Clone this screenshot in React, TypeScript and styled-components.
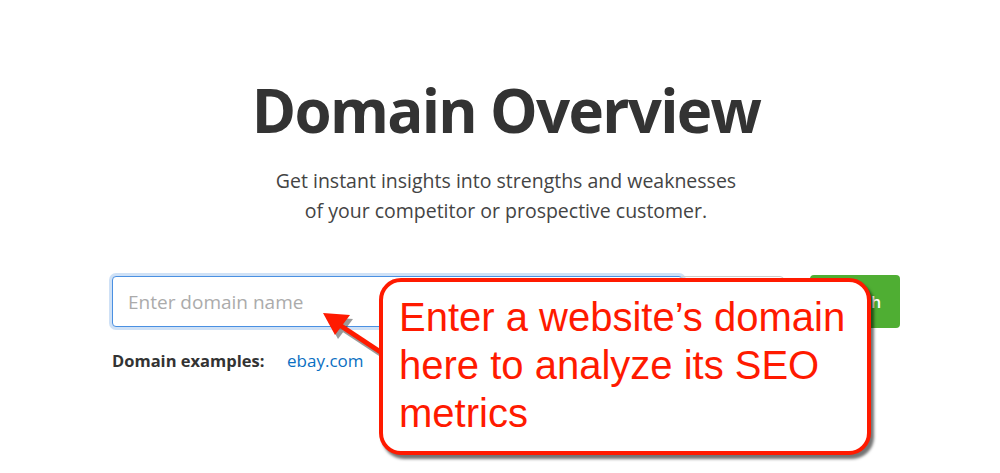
import React from 'react'
import styled, { createGlobalStyle } from 'styled-components'

const GlobalStyle = createGlobalStyle`
  html, body {
    margin: 0;
    padding: 0;
    background: #ffffff;
  }
  body {
    font-family: 'Open Sans', 'Noto Sans', sans-serif;
    color: #333333;
  }
`

const Page = styled.main`
  position: relative;
  width: 1000px;
  height: 473px;
  overflow: hidden;
  box-sizing: border-box;
  padding: 0 100px 0 112px;
`

const Title = styled.h1`
  margin: 0;
  padding-top: 70px;
  font-size: 60px;
  line-height: 80px;
  font-weight: 700;
  letter-spacing: -1.7px;
  text-align: center;
  color: #333333;
`

const Subtitle = styled.p`
  margin: 16px 0 0;
  font-size: 19.5px;
  line-height: 30px;
  text-align: center;
  color: #444444;
`

const SearchRow = styled.form`
  display: flex;
  align-items: center;
  margin-top: 49px;
`

const DomainInput = styled.input`
  box-sizing: border-box;
  width: 571px;
  height: 51px;
  padding: 0 15px;
  border: 1px solid #4a90e2;
  border-radius: 4px;
  box-shadow: 0 0 0 3px #cfe1f6;
  font-family: inherit;
  font-size: 19px;
  color: #333333;
  outline: none;

  &::placeholder {
    color: #ababab;
  }
`

const DatabaseSelect = styled.div`
  box-sizing: border-box;
  width: 103px;
  height: 51px;
  margin-left: -2px;
  border: 1px solid #cccccc;
  border-radius: 0 4px 4px 0;
`

const SearchButton = styled.button`
  box-sizing: border-box;
  width: 90px;
  height: 53px;
  margin-left: 26px;
  border: none;
  border-radius: 4px;
  background: #4fae33;
  color: #ffffff;
  font-family: inherit;
  font-size: 16px;
  font-weight: 600;
`

const Examples = styled.div`
  display: flex;
  align-items: baseline;
  margin-top: 21px;
  font-size: 16.5px;
`

const ExamplesLabel = styled.span`
  font-weight: 700;
  color: #333333;
  width: 175px;
`

const ExampleLink = styled.a`
  color: #0a6fc2;
  font-size: 17px;
  text-decoration: none;
`

const Callout = styled.div`
  position: absolute;
  left: 379px;
  top: 278px;
  width: 492px;
  height: 177px;
  box-sizing: border-box;
  padding: 11px 0 0 16px;
  border: 4.5px solid #ff1a00;
  border-radius: 22px;
  background: #ffffff;
  box-shadow: 3px 4px 3px rgba(0, 0, 0, 0.55);
  font-family: 'Liberation Sans', Arial, sans-serif;
  font-size: 40px;
  line-height: 48px;
  color: #ff1a00;
  white-space: nowrap;
`

const Arrow = styled.svg`
  position: absolute;
  left: 310px;
  top: 300px;
  overflow: visible;
`

export default function App() {
  return (
    <>
      <GlobalStyle />
      <Page>
        <Title>Domain Overview</Title>
        <Subtitle>
          Get instant insights into strengths and weaknesses
          <br />
          of your competitor or prospective customer.
        </Subtitle>
        <SearchRow onSubmit={(e) => e.preventDefault()}>
          <DomainInput placeholder="Enter domain name" />
          <DatabaseSelect />
          <SearchButton type="submit">Search</SearchButton>
        </SearchRow>
        <Examples>
          <ExamplesLabel>Domain examples:</ExamplesLabel>
          <ExampleLink href="#">ebay.com</ExampleLink>
        </Examples>

        <Arrow width="80" height="60" viewBox="0 0 80 60">
          <g transform="translate(3 4)" opacity="0.45" fill="#222" stroke="#222">
            <line x1="22" y1="20" x2="75" y2="55" strokeWidth="5" />
            <polygon points="13,13 40,15 25,35" stroke="none" />
          </g>
          <g fill="#ff1a00" stroke="#ff1a00">
            <line x1="22" y1="20" x2="75" y2="55" strokeWidth="5" />
            <polygon points="13,13 40,15 25,35" stroke="none" />
          </g>
        </Arrow>
        <Callout>
          Enter a website’s domain
          <br />
          here to analyze its SEO
          <br />
          metrics
        </Callout>
      </Page>
    </>
  )
}
